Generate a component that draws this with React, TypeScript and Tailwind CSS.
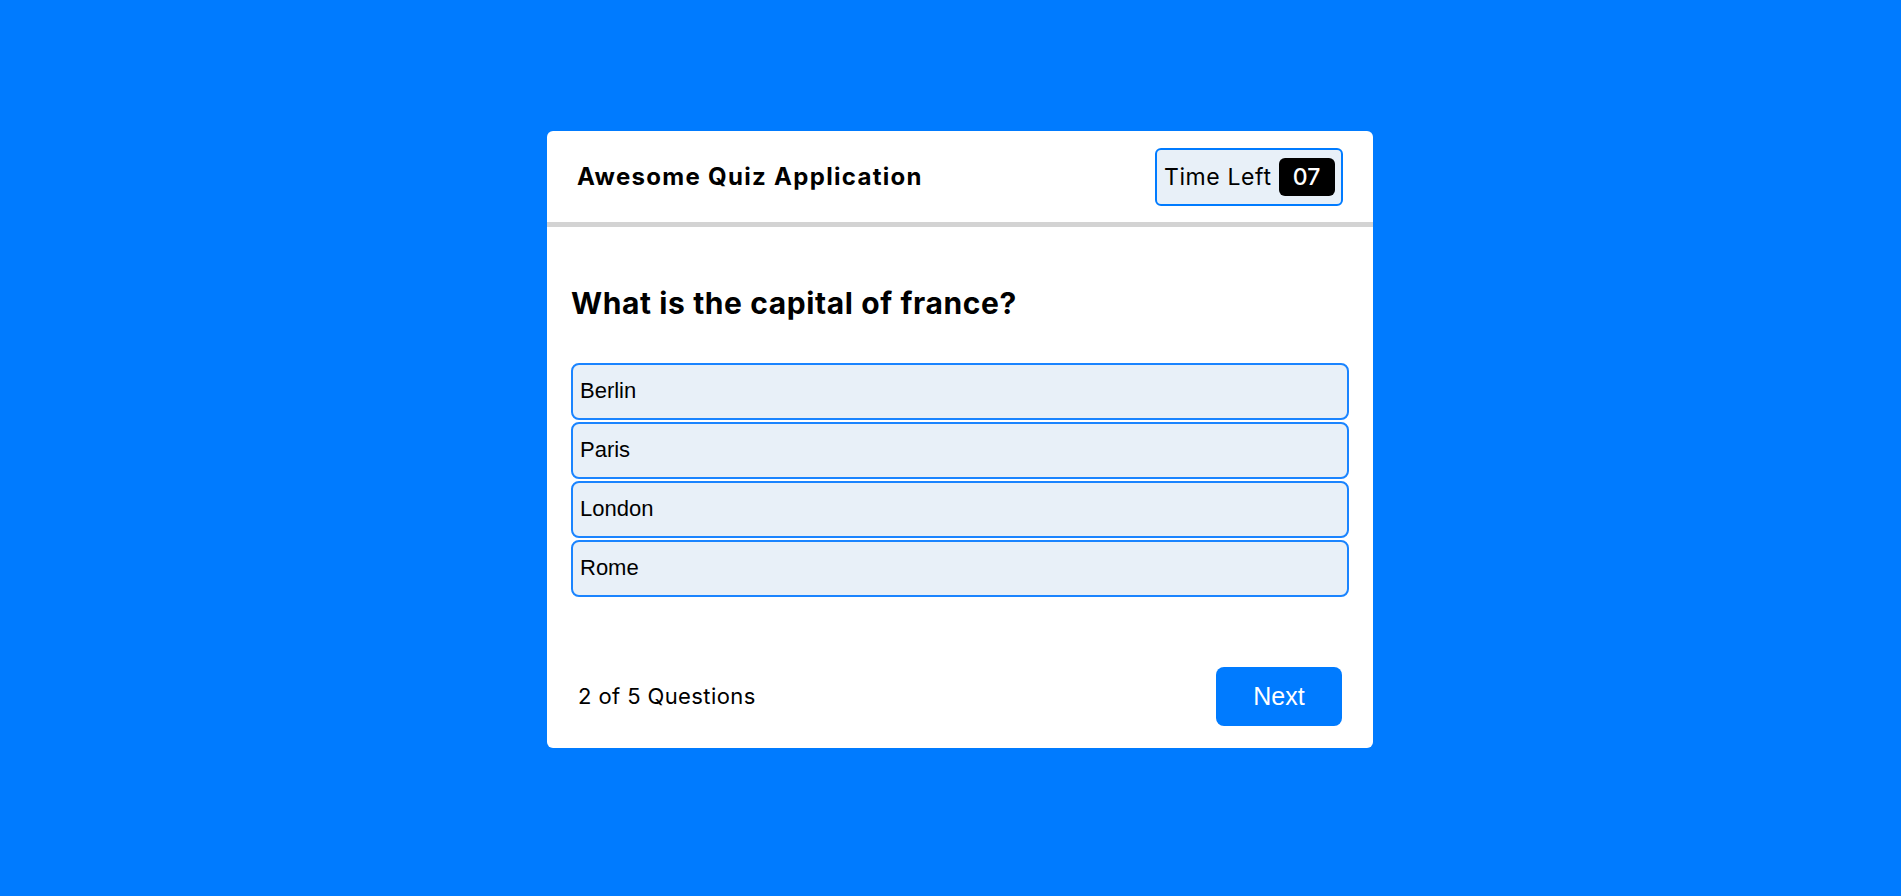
const options = ['Berlin', 'Paris', 'London', 'Rome'];

export default function App() {
  return (
    <div className="min-h-screen w-full bg-[#007bff] pt-[131px] pb-[148px]">
      <div className="ml-[547px] w-[826px] rounded-[6px] bg-white">
        <header className="flex h-[96px] items-center justify-between border-b-[5px] border-[#d3d3d3] px-[30px] pt-px">
          <span className="font-['Inter',sans-serif] text-[24px] font-bold tracking-[1.3px] text-black">
            Awesome Quiz Application
          </span>
          <div className="flex h-[58px] w-[188px] items-center rounded-[6px] border-2 border-[#007bff] bg-[#e8f0f8] pl-[7px]">
            <span className="font-['Inter',sans-serif] text-[23px] tracking-[0.6px] text-black">Time Left</span>
            <span className="ml-[7px] flex h-[38px] w-[56px] items-center justify-center rounded-[6px] bg-black font-['Inter',sans-serif] text-[23px] font-medium text-white">
              07
            </span>
          </div>
        </header>

        <section className="px-[24px] pt-[58px]">
          <h2 className="font-['Inter',sans-serif] text-[30px] leading-[36px] font-bold tracking-[0.6px] text-black">
            What is the capital of france?
          </h2>
          <ul className="mt-[42px] flex flex-col gap-[2px]">
            {options.map((opt) => (
              <li
                key={opt}
                className="flex h-[57px] items-center rounded-[8px] border-2 border-[#1a84ff] bg-[#e8f0f8] px-[7px] pb-[2px] font-['Liberation_Sans',Arial,sans-serif] text-[22px] text-black"
              >
                {opt}
              </li>
            ))}
          </ul>
        </section>

        <footer className="flex items-center justify-between px-[31px] pt-[70px] pb-[22px]">
          <span className="font-['Inter',sans-serif] text-[22px] tracking-[0.4px] text-black">2 of 5 Questions</span>
          <button className="h-[59px] w-[126px] rounded-[8px] bg-[#007bff] font-['Liberation_Sans',Arial,sans-serif] text-[25px] text-white">
            Next
          </button>
        </footer>
      </div>
    </div>
  );
}
